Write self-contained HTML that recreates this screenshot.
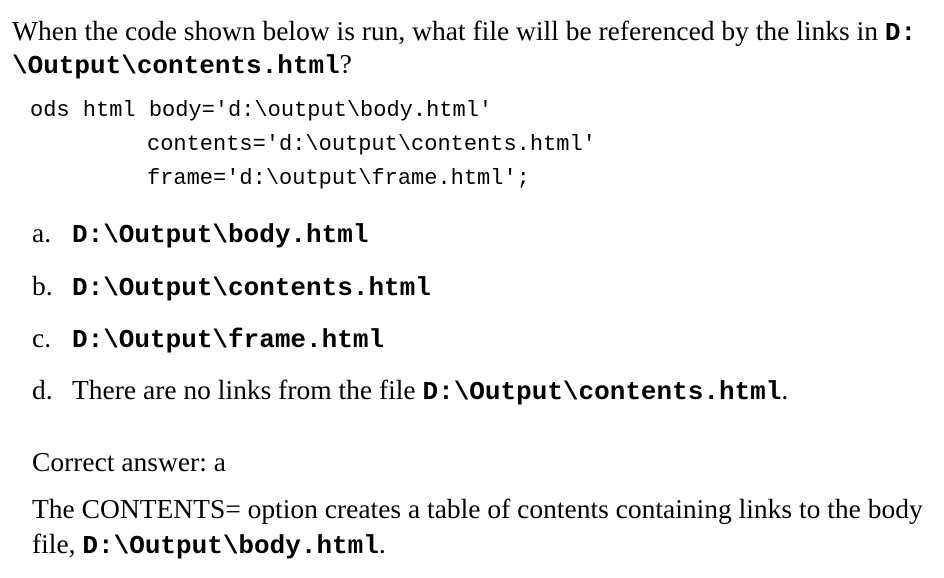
<!DOCTYPE html>
<html><head><style>
body{margin:0;width:944px;height:578px;background:#fff;position:relative;overflow:hidden;color:#000;}
.s{position:absolute;font-family:"Liberation Serif",serif;font-size:27.5px;white-space:nowrap;line-height:1;}
.c{position:absolute;font-family:"Liberation Mono",monospace;font-size:22px;white-space:nowrap;line-height:1;}
b{font-family:"Liberation Mono",monospace;font-weight:bold;font-size:26px;}
.l{display:inline-block;width:40px;}
</style></head><body>
<div class="s" style="left:12px;top:17px">When the code shown below is run, what file will be referenced by the links in <b>D:</b></div>
<div class="s" style="left:12px;top:50px"><b>\Output\contents.html</b>?</div>
<div class="c" style="left:30px;top:100px">ods html body='d:\output\body.html'</div>
<div class="c" style="left:147px;top:134px">contents='d:\output\contents.html'</div>
<div class="c" style="left:147px;top:168px">frame='d:\output\frame.html';</div>
<div class="s" style="left:32px;top:219px"><span class="l">a.</span><b>D:\Output\body.html</b></div>
<div class="s" style="left:32px;top:272px"><span class="l">b.</span><b>D:\Output\contents.html</b></div>
<div class="s" style="left:32px;top:324px"><span class="l">c.</span><b>D:\Output\frame.html</b></div>
<div class="s" style="left:32px;top:376px"><span class="l">d.</span>There are no links from the file <b>D:\Output\contents.html</b>.</div>
<div class="s" style="left:32px;top:448px">Correct answer: a</div>
<div class="s" style="left:32px;top:495px">The CONTENTS= option creates a table of contents containing links to the body</div>
<div class="s" style="left:32px;top:530px">file, <b>D:\Output\body.html</b>.</div>
</body></html>
